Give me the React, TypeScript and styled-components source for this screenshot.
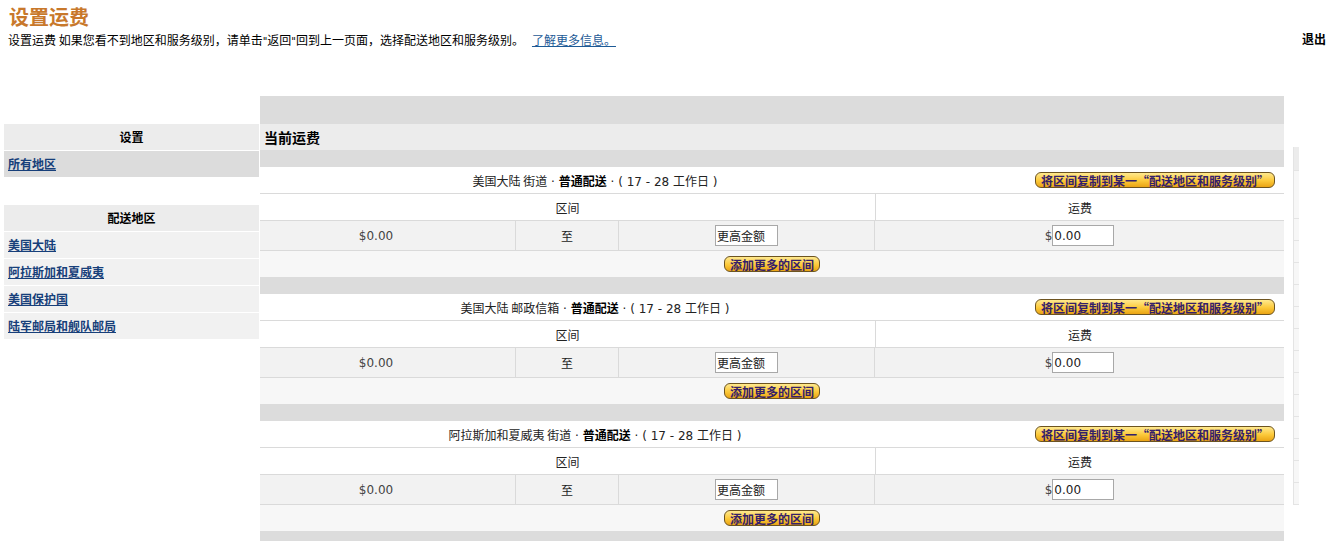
import React from "react";
import styled, { createGlobalStyle } from "styled-components";

const GlobalStyle = createGlobalStyle`
  body {
    margin: 0;
    background: #fff;
    font-family: "DejaVu Sans", "Noto Sans CJK SC", sans-serif;
    font-size: 12px;
    color: #333;
  }
`;

const cjk = `"Noto Sans CJK SC", "DejaVu Sans", sans-serif`;

const sections = [
  { region: "美国大陆", method: "街道" },
  { region: "美国大陆", method: "邮政信箱" },
  { region: "阿拉斯加和夏威夷", method: "街道" },
];

const regions = ["美国大陆", "阿拉斯加和夏威夷", "美国保护国", "陆军邮局和舰队邮局"];

const Page = styled.div`
  width: 1329px;
`;

const Header = styled.div`
  height: 96px;
  display: flex;
  justify-content: space-between;
  box-sizing: border-box;
  padding: 4px 3px 0 8px;
`;

const Title = styled.h1`
  margin: 0 0 0 1px;
  font-family: ${cjk};
  font-size: 20px;
  line-height: 26px;
  font-weight: bold;
  color: #c8782b;
`;

const Intro = styled.p`
  margin: 2px 0 0;
  font-family: ${cjk};
  font-size: 12px;
  line-height: 16px;
  color: #000;
`;

const Quote = styled.span`
  font-family: "DejaVu Sans", sans-serif;
  font-size: 10px;
`;

const MoreLink = styled.a`
  margin-left: 8px;
  color: #1d5a96;
  text-decoration: underline;
`;

const Logout = styled.a`
  margin-top: 26px;
  font-family: ${cjk};
  font-weight: bold;
  font-size: 12px;
  color: #000;
  align-self: flex-start;
`;

const Body = styled.div`
  display: flex;
  align-items: flex-start;
  padding-left: 4px;
`;

const Sidebar = styled.div`
  width: 255px;
  margin-top: 28px;
  margin-right: 1px;
  display: flex;
  flex-direction: column;
`;

const SideHead = styled.div`
  height: 26px;
  line-height: 26px;
  background: #ececec;
  text-align: center;
  font-family: ${cjk};
  font-weight: bold;
  color: #000;
  margin-bottom: 1px;
`;

const SideItem = styled.div<{ $dark?: boolean }>`
  height: 26px;
  line-height: 26px;
  padding-left: 4px;
  background: ${(p) => (p.$dark ? "#dcdcdc" : "#f1f1f1")};
  margin-bottom: 1px;
`;

const SideLink = styled.a`
  font-family: ${cjk};
  font-weight: bold;
  color: #173f7a;
  text-decoration: underline;
`;

const SideGap = styled.div`
  height: 27px;
`;

const Main = styled.div`
  width: 1024px;
  display: flex;
  flex-direction: column;
`;

const Strip = styled.div<{ $h: number }>`
  height: ${(p) => p.$h}px;
  background: #dcdcdc;
`;

const MainHead = styled.div`
  height: 26px;
  line-height: 26px;
  background: #ececec;
  padding-left: 4px;
  font-family: ${cjk};
  font-weight: bold;
  font-size: 14px;
  color: #000;
`;

const SectionHead = styled.div`
  display: grid;
  grid-template-columns: 670px 1fr;
  height: 26px;
  background: #fff;
  border-bottom: 1px solid #dadada;
  align-items: center;
`;

const SectionTitle = styled.div`
  text-align: center;
  color: #222;
  font-family: "DejaVu Sans", "Noto Sans CJK SC", sans-serif;
  b {
    color: #000;
    font-family: ${cjk};
  }
`;

const Han = styled.span`
  font-family: ${cjk};
`;

const ButtonCell = styled.div`
  display: flex;
  justify-content: flex-end;
  padding-right: 9px;
`;

const GoldButton = styled.button`
  height: 16px;
  padding: 0 5px;
  border: 1px solid #6d5420;
  border-radius: 6px;
  background: linear-gradient(#ffe98f, #fcc93a 55%, #eaa414);
  font-family: ${cjk};
  font-weight: bold;
  font-size: 12px;
  line-height: 13px;
  color: #35206a;
  cursor: pointer;
`;

const Row = styled.div<{ $bg: string; $h: number; $cols: string }>`
  display: grid;
  grid-template-columns: ${(p) => p.$cols};
  height: ${(p) => p.$h}px;
  background: ${(p) => p.$bg};
  border-bottom: 1px solid #dadada;
`;

const Cell = styled.div<{ $shift?: number }>`
  display: flex;
  align-items: center;
  justify-content: center;
  padding-right: ${(p) => p.$shift || 0}px;
  border-right: 1px solid #dadada;
  font-family: ${cjk};
  color: #222;
  &:last-child {
    border-right: none;
  }
`;

const Money = styled.span`
  font-family: "DejaVu Sans", sans-serif;
  color: #444;
`;

const Field = styled.input<{ $w: number; $han?: boolean }>`
  width: ${(p) => p.$w}px;
  height: 21px;
  box-sizing: border-box;
  border: 1px solid #a8a8a8;
  padding: 0 1px;
  font-family: ${(p) => (p.$han ? cjk : `"DejaVu Sans", sans-serif`)};
  font-size: 12px;
  font-weight: normal;
  color: #222;
  background: #fff;
`;

const AddRow = styled.div`
  height: 26px;
  background: #f7f7f7;
  display: flex;
  align-items: center;
  justify-content: center;
`;

const Ghost = styled.div`
  width: 5px;
  margin: 51px 0 0 9px;
  border-left: 1px solid #e4e4e4;
  display: flex;
  flex-direction: column;
`;

const GhostCell = styled.div<{ $h: number; $bg?: string }>`
  height: ${(p) => p.$h}px;
  background: ${(p) => p.$bg || "#f7f7f7"};
  border-bottom: 1px solid #e4e4e4;
`;

const cols4 = "256px 103px 256px 1fr";
const cols2 = "616px 1fr";

function Section({ region, method }: { region: string; method: string }) {
  return (
    <>
      <SectionHead>
        <SectionTitle>
          <Han>
            {region} {method}
          </Han>{" "}
          · <b>普通配送</b> · ( 17 - 28 <Han>工作日</Han> )
        </SectionTitle>
        <ButtonCell>
          <GoldButton>将区间复制到某一“配送地区和服务级别”</GoldButton>
        </ButtonCell>
      </SectionHead>
      <Row $bg="#fff" $h={26} $cols={cols2}>
        <Cell>区间</Cell>
        <Cell>运费</Cell>
      </Row>
      <Row $bg="#f2f2f2" $h={29} $cols={cols4}>
        <Cell $shift={23}>
          <Money>$0.00</Money>
        </Cell>
        <Cell>至</Cell>
        <Cell>
          <Field $w={63} $han defaultValue="更高金额" />
        </Cell>
        <Cell>
          <Money>$</Money>
          <Field $w={62} defaultValue="0.00" />
        </Cell>
      </Row>
      <AddRow>
        <GoldButton>添加更多的区间</GoldButton>
      </AddRow>
    </>
  );
}

export default function App() {
  return (
    <Page>
      <GlobalStyle />
      <Header>
        <div>
          <Title>设置运费</Title>
          <Intro>
            设置运费 如果您看不到地区和服务级别，请单击<Quote>"</Quote>返回<Quote>"</Quote>
            回到上一页面，选择配送地区和服务级别。
            <MoreLink href="#">了解更多信息。</MoreLink>
          </Intro>
        </div>
        <Logout>退出</Logout>
      </Header>
      <Body>
        <Sidebar>
          <SideHead>设置</SideHead>
          <SideItem $dark>
            <SideLink href="#">所有地区</SideLink>
          </SideItem>
          <SideGap />
          <SideHead>配送地区</SideHead>
          {regions.map((r) => (
            <SideItem key={r}>
              <SideLink href="#">{r}</SideLink>
            </SideItem>
          ))}
        </Sidebar>
        <Main>
          <Strip $h={28} />
          <MainHead>当前运费</MainHead>
          {sections.map((s, i) => (
            <React.Fragment key={i}>
              <Strip $h={17} />
              <Section region={s.region} method={s.method} />
            </React.Fragment>
          ))}
          <Strip $h={10} />
        </Main>
        <Ghost>
          <GhostCell $h={23} $bg="#ececec" />
          {Array.from({ length: 14 }).map((_, i) => (
            <GhostCell key={i} $h={i === 0 ? 47 : 21} />
          ))}
        </Ghost>
      </Body>
    </Page>
  );
}
